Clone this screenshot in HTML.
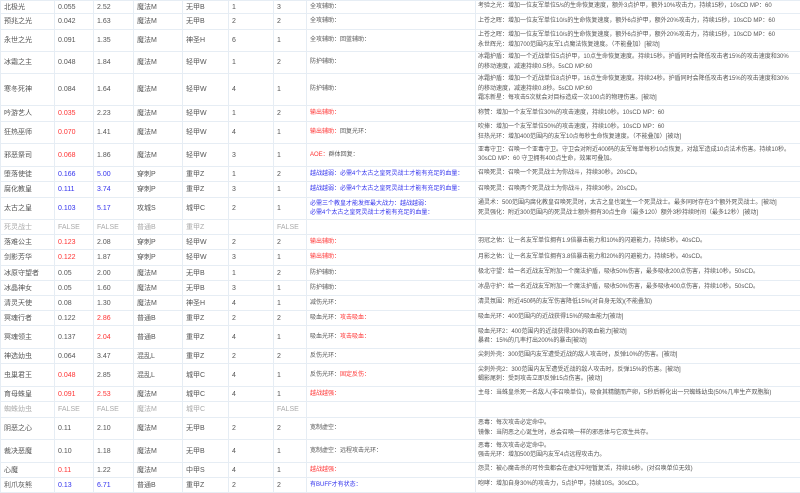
<!DOCTYPE html>
<html><head><meta charset="utf-8"><style>
html,body{margin:0;padding:0;background:#fff;width:800px;height:493px;overflow:hidden}
table{border-collapse:collapse;table-layout:fixed;width:800px;font-family:"Liberation Sans","Noto Sans CJK SC",sans-serif;color:#555}
td{border:1px solid #e6edf4;padding:0 0 0 3px;font-size:7px;line-height:9px;vertical-align:middle;white-space:nowrap;overflow:hidden}
td.s{font-size:6px}
td.d{font-size:6px;line-height:9.5px;padding-left:2px}
.r{color:#f33}.b{color:#33e}.g{color:#aaa}
tr.g td{color:#aaa}
</style></head><body>
<table>
<colgroup><col style="width:54px"><col style="width:39px"><col style="width:40px"><col style="width:49px"><col style="width:46px"><col style="width:45px"><col style="width:33px"><col style="width:169px"><col style="width:325px"></colgroup>
<tr style="height:13px"><td>北极光</td><td>0.055</td><td>2.52</td><td>魔法M</td><td>无甲B</td><td>1</td><td>3</td><td class="s">全攻辅助：</td><td class="d">考验之光：增加一位友军单位5/s的生命恢复速度，额外3点护甲，额外10%攻击力，持续15秒，10sCD MP：60</td></tr>
<tr style="height:16px"><td>预兆之光</td><td>0.042</td><td>1.63</td><td>魔法M</td><td>无甲B</td><td>2</td><td>2</td><td class="s">全攻辅助：</td><td class="d">上苍之晖：增加一位友军单位10/s的生命恢复速度，额外6点护甲，额外20%攻击力，持续15秒，10sCD MP：60</td></tr>
<tr style="height:22px"><td>永世之光</td><td>0.091</td><td>1.35</td><td>魔法M</td><td>神圣H</td><td>6</td><td>1</td><td class="s">全攻辅助：回蓝辅助：</td><td class="d">上苍之晖：增加一位友军单位10/s的生命恢复速度，额外6点护甲，额外20%攻击力，持续15秒，10sCD MP：60<br>永世辉光：增加700范围内友军1点魔法恢复速度。（不能叠加）[被动]</td></tr>
<tr style="height:22px"><td>冰霜之主</td><td>0.048</td><td>1.84</td><td>魔法M</td><td>轻甲W</td><td>1</td><td>2</td><td class="s">防护辅助：</td><td class="d">冰霜护盾：增加一个近战单位5点护甲，10点生命恢复速度。持续15秒。护盾同时会降低攻击者15%的攻击速度和30%<br>的移动速度，减速持续0.5秒。5sCD MP:60</td></tr>
<tr style="height:32px"><td>寒冬死神</td><td>0.084</td><td>1.64</td><td>魔法M</td><td>轻甲W</td><td>4</td><td>1</td><td class="s">防护辅助：</td><td class="d">冰霜护盾：增加一个近战单位8点护甲，16点生命恢复速度。持续24秒。护盾同时会降低攻击者15%的攻击速度和30%<br>的移动速度，减速持续0.8秒。5sCD MP:60<br>霜冻新星：每攻击5次就会对目标造成一次100点的物理伤害。[被动]</td></tr>
<tr style="height:16px"><td>吟游艺人</td><td class="r">0.035</td><td>2.23</td><td>魔法M</td><td>轻甲W</td><td>1</td><td>2</td><td class="s r">输出辅助：</td><td class="d">称赞：增加一个友军单位30%的攻击速度，持续10秒。10sCD MP：60</td></tr>
<tr style="height:22px"><td>狂热巫师</td><td class="r">0.070</td><td>1.41</td><td>魔法M</td><td>轻甲W</td><td>4</td><td>1</td><td class="s"><span class="r">输出辅助：</span>回复光环：</td><td class="d">吹捧：增加一个友军单位50%的攻击速度，持续10秒。10sCD MP：60<br>狂热光环：增加400范围内的友军10点每秒生命恢复速度。（不能叠加）[被动]</td></tr>
<tr style="height:23px"><td>邪恶祭司</td><td class="r">0.068</td><td>1.86</td><td>魔法M</td><td>轻甲W</td><td>3</td><td>1</td><td class="s"><span class="r">AOE：</span>群体回复：</td><td class="d">亚毒守卫：召唤一个亚毒守卫。守卫会对附近400码的友军每单每秒10点恢复，对敌军造成10点法术伤害。持续10秒。<br>30sCD MP：60 守卫拥有400点生命，效果可叠加。</td></tr>
<tr style="height:15px"><td>堕落使徒</td><td class="b">0.166</td><td class="b">5.00</td><td>穿刺P</td><td>重甲Z</td><td>1</td><td>2</td><td class="s b">越战越弱：必需4个太古之皇死灵战士才能有充足的血量：</td><td class="d">召唤死灵：召唤一个死灵战士为你战斗，持续30秒。20sCD。</td></tr>
<tr style="height:16px"><td>腐化教皇</td><td class="b">0.111</td><td class="b">3.74</td><td>穿刺P</td><td>重甲Z</td><td>3</td><td>1</td><td class="s b">越战越弱：必需4个太古之皇死灵战士才能有充足的血量：</td><td class="d">召唤死灵：召唤两个死灵战士为你战斗，持续30秒。20sCD。</td></tr>
<tr style="height:22px"><td>太古之皇</td><td class="b">0.103</td><td class="b">5.17</td><td>攻城S</td><td>城甲C</td><td>2</td><td>1</td><td class="s b">必需三个教皇才能发挥最大战力：越战越弱：<br>必需4个太古之皇死灵战士才能有充足的血量：</td><td class="d">通灵术：500范围内腐化教皇召唤死灵时，太古之皇也诞生一个死灵战士。最多同时存在3个额外死灵战士。[被动]<br>死灵强化：附近300范围内的死灵战士额外拥有30点生命（最多120）额外3秒持续时间（最多12秒）[被动]</td></tr>
<tr style="height:15px" class="g"><td>死灵战士</td><td>FALSE</td><td>FALSE</td><td>普通B</td><td>重甲Z</td><td></td><td>FALSE</td><td class="s"></td><td class="d"></td></tr>
<tr style="height:15px"><td>落难公主</td><td class="r">0.123</td><td>2.08</td><td>穿刺P</td><td>轻甲W</td><td>2</td><td>2</td><td class="s r">输出辅助：</td><td class="d">羽冠之佑：让一名友军单位拥有1.9倍暴击能力和10%的闪避能力，持续5秒。40sCD。</td></tr>
<tr style="height:16px"><td>剑影芳华</td><td class="r">0.122</td><td>1.87</td><td>穿刺P</td><td>轻甲W</td><td>3</td><td>1</td><td class="s r">输出辅助：</td><td class="d">月影之佑：让一名友军单位拥有3.8倍暴击能力和20%的闪避能力，持续5秒。40sCD。</td></tr>
<tr style="height:15px"><td>冰原守望者</td><td>0.05</td><td>2.00</td><td>魔法M</td><td>无甲B</td><td>1</td><td>2</td><td class="s">防护辅助：</td><td class="d">极北守望：给一名近战友军附加一个魔法护盾，吸收50%伤害，最多吸收200点伤害，持续10秒。50sCD。</td></tr>
<tr style="height:15px"><td>冰晶神女</td><td>0.05</td><td>1.60</td><td>魔法M</td><td>无甲B</td><td>3</td><td>1</td><td class="s">防护辅助：</td><td class="d">冰晶守护：给一名近战友军附加一个魔法护盾，吸收50%伤害，最多吸收400点伤害，持续10秒。50sCD。</td></tr>
<tr style="height:15px"><td>清灵天使</td><td>0.08</td><td>1.30</td><td>魔法M</td><td>神圣H</td><td>4</td><td>1</td><td class="s">减伤光环：</td><td class="d">清灵氛围：附近450码的友军伤害降低15%(对自身无效)(不能叠加)</td></tr>
<tr style="height:15px"><td>冥魂行者</td><td>0.122</td><td class="r">2.86</td><td>普通B</td><td>重甲Z</td><td>2</td><td>2</td><td class="s">吸血光环：<span class="r">攻击吸血：</span></td><td class="d">吸血光环：400范围内的近战获得15%的吸血能力[被动]</td></tr>
<tr style="height:23px"><td>冥魂领主</td><td>0.137</td><td class="r">2.04</td><td>普通B</td><td>重甲Z</td><td>4</td><td>1</td><td class="s">吸血光环：<span class="r">攻击吸血：</span></td><td class="d">吸血光环2：400范围内的近战获得30%的吸血能力[被动]<br>暴君：15%的几率打出200%的暴击[被动]</td></tr>
<tr style="height:15px"><td>神选幼虫</td><td>0.064</td><td>3.47</td><td>混乱L</td><td>重甲Z</td><td>2</td><td>2</td><td class="s">反伤光环：</td><td class="d">尖刺外壳：300范围内友军遭受近战的敌人攻击时，反弹10%的伤害。[被动]</td></tr>
<tr style="height:23px"><td>虫巢君王</td><td class="r">0.048</td><td>2.85</td><td>混乱L</td><td>城甲C</td><td>4</td><td>1</td><td class="s">反伤光环：<span class="r">固定反伤：</span></td><td class="d">尖刺外壳2：300范围内友军遭受近战的敌人攻击时，反弹15%的伤害。[被动]<br>蝎影尾刺：受到攻击立即反弹15点伤害。[被动]</td></tr>
<tr style="height:15px"><td>育母蛛皇</td><td class="r">0.091</td><td class="r">2.53</td><td>魔法M</td><td>城甲C</td><td>4</td><td>1</td><td class="s r">越战越强：</td><td class="d">主母：当蛛皇杀死一名敌人(非召唤单位)，吸食其精髓而产卵，5秒后孵化出一只蜘蛛幼虫(50%几率生产双胞胎)</td></tr>
<tr style="height:16px" class="g"><td>蜘蛛幼虫</td><td>FALSE</td><td>FALSE</td><td>魔法M</td><td>城甲C</td><td></td><td>FALSE</td><td class="s"></td><td class="d"></td></tr>
<tr style="height:22px"><td>阴恶之心</td><td>0.11</td><td>2.10</td><td>魔法M</td><td>无甲B</td><td>2</td><td>2</td><td class="s">宽制虚空：</td><td class="d">恶毒：每次攻击必定命中。<br>镜像：当阴恶之心诞生时，总会召唤一样的邪恶体与它双生共存。</td></tr>
<tr style="height:23px"><td>裁决恶魔</td><td>0.10</td><td>1.18</td><td>魔法M</td><td>无甲B</td><td>4</td><td>1</td><td class="s">宽制虚空：远程攻击光环：</td><td class="d">恶毒：每次攻击必定命中。<br>强击光环：增加500范围内友军4点远程攻击力。</td></tr>
<tr style="height:15px"><td>心魔</td><td class="r">0.11</td><td>1.22</td><td>魔法M</td><td>中甲S</td><td>4</td><td>1</td><td class="s r">越战越强：</td><td class="d">怨灵：被心魔击杀的可怜虫都会在虚幻中短暂复活，持续16秒。(对召唤单位无效)</td></tr>
<tr style="height:15px"><td>利爪灰熊</td><td class="b">0.13</td><td class="b">6.71</td><td>普通B</td><td>重甲Z</td><td>2</td><td>2</td><td class="s b">有BUFF才有状态：</td><td class="d">咆哮：增加自身30%的攻击力，5点护甲，持续10S。30sCD。</td></tr>
</table>
</body></html>
